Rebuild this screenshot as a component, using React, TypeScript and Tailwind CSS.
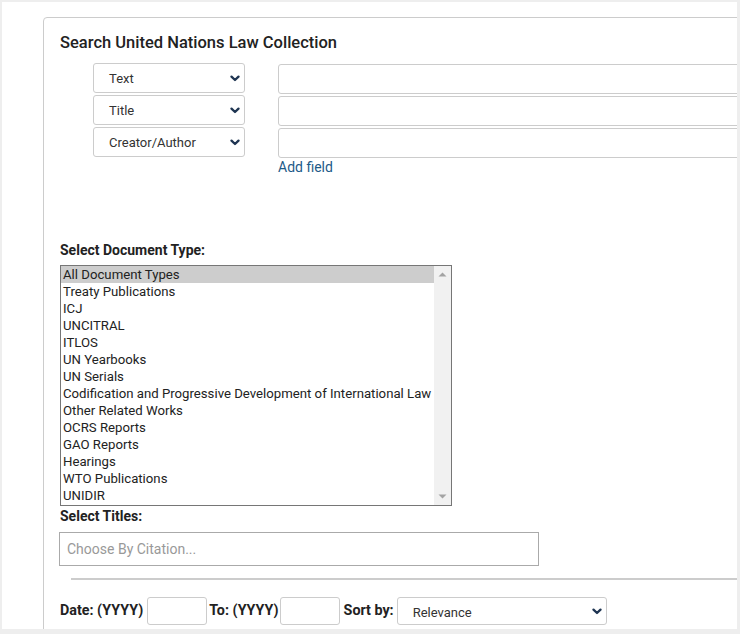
import React from "react";

const Chevron = () => (
  <svg width="10" height="7" viewBox="0 0 10 7" className="shrink-0">
    <polyline points="1.5,1.6 5,5 8.5,1.6" fill="none" stroke="#1f3552" strokeWidth="2.3" strokeLinecap="round" strokeLinejoin="round" />
  </svg>
);

const SelectBox = ({ label }: { label: string }) => (
  <div className="h-[30px] w-[152px] border border-[#ccc] rounded-[3px] flex items-center justify-between pl-[15px] pr-[4px] text-[13px] text-[#333]">
    <span className="pt-[2px]">{label}</span>
    <Chevron />
  </div>
);

const items = [
  "All Document Types",
  "Treaty Publications",
  "ICJ",
  "UNCITRAL",
  "ITLOS",
  "UN Yearbooks",
  "UN Serials",
  "Codification and Progressive Development of International Law",
  "Other Related Works",
  "OCRS Reports",
  "GAO Reports",
  "Hearings",
  "WTO Publications",
  "UNIDIR",
];

export default function App() {
  return (
    <div className="h-[634px] w-[740px] bg-[#eee] pt-[2px] pl-[2px] overflow-hidden" style={{ fontFamily: "Roboto, 'Liberation Sans', sans-serif" }}>
      <div className="bg-white w-[735px] h-[627px] overflow-hidden pl-[41px] pt-[15px]">
        <div className="w-[760px] h-[700px] border border-[#ccc] rounded-[4px] pl-[16px] pt-[14px]">
          <h2 className="text-[16.5px] leading-[22px] font-medium text-[#222]">Search United Nations Law Collection</h2>
          <div className="flex mt-[9px] pl-[33px] gap-[33px]">
            <div className="flex flex-col gap-[2px]">
              <SelectBox label="Text" />
              <SelectBox label="Title" />
              <SelectBox label="Creator/Author" />
            </div>
            <div className="flex flex-col gap-[2px] pt-[1px]">
              <div className="h-[30px] w-[600px] border border-[#ccc] rounded-[3px]" />
              <div className="h-[30px] w-[600px] border border-[#ccc] rounded-[3px]" />
              <div className="h-[30px] w-[600px] border border-[#ccc] rounded-[3px]" />
              <a className="text-[14px] leading-[18px] text-[#1d5a88] mt-[-2px]">Add field</a>
            </div>
          </div>
          <div className="mt-[65px] text-[14px] leading-[18px] font-bold text-[#222]">Select Document Type:</div>
          <div className="mt-[6px] w-[392px] h-[241px] border border-[#767676] flex">
            <div className="flex-1 flex flex-col text-[13.2px] leading-[17px] text-[#222]">
              {items.map((t, i) => (
                <div key={t} className={(i === 0 ? "bg-[#cdcdcd] " : "") + "pl-[2px] h-[17px] whitespace-nowrap"}>{t}</div>
              ))}
            </div>
            <div className="w-[17px] bg-[#f1f1f1] flex flex-col justify-between items-center py-[6px]">
              <svg width="9" height="5" viewBox="0 0 9 5"><polygon points="0.5,4.5 4.5,0.5 8.5,4.5" fill="#a3a3a3" /></svg>
              <svg width="9" height="5" viewBox="0 0 9 5"><polygon points="0.5,0.5 4.5,4.5 8.5,0.5" fill="#a3a3a3" /></svg>
            </div>
          </div>
          <div className="mt-[1px] text-[14px] leading-[18px] font-bold text-[#222]">Select Titles:</div>
          <div className="mt-[7px] ml-[-1px] w-[480px] h-[34px] border border-[#aaa] flex items-center pl-[7px] text-[14px] text-[#999]">Choose By Citation...</div>
          <div className="mt-[12px] ml-[11px] h-[2px] bg-[#ccc] w-[700px]" />
          <div className="mt-[16px] flex items-center text-[14.3px] font-bold text-[#222]">
            <span>Date: (YYYY)</span>
            <div className="ml-[4px] w-[60px] h-[28px] border border-[#ccc] rounded-[3px]" />
            <span className="ml-[2px]">To: (YYYY)</span>
            <div className="ml-[1px] w-[60px] h-[28px] border border-[#ccc] rounded-[3px]" />
            <span className="ml-[4px]">Sort by:</span>
            <div className="ml-[3px] mt-[1px] w-[210px] h-[28px] border border-[#ccc] rounded-[3px] flex items-center justify-between pl-[15px] pr-[4px] text-[13px] font-normal text-[#333]">
              <span className="pt-[3px]">Relevance</span>
              <Chevron />
            </div>
          </div>
        </div>
      </div>
    </div>
  );
}
